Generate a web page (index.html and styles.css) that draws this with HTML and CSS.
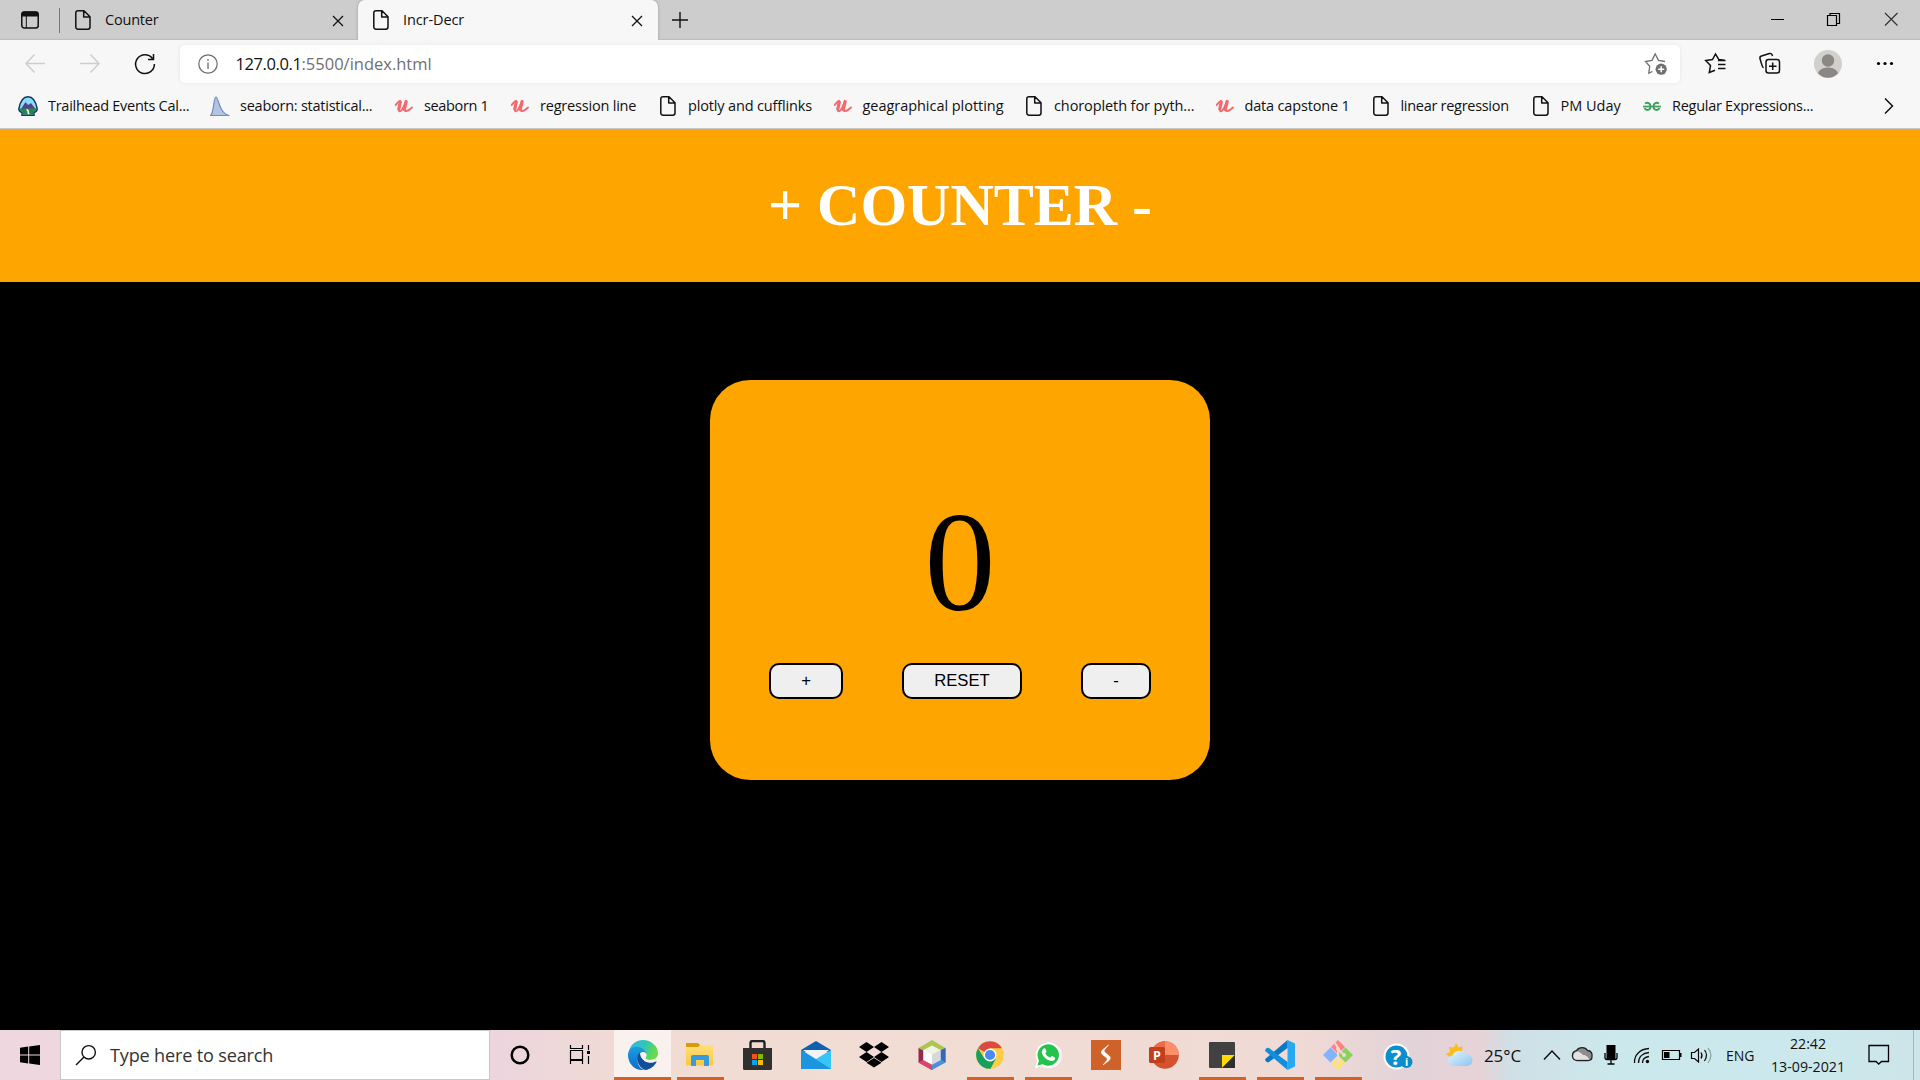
FILE: index.html
```html
<!DOCTYPE html>
<html lang="en">
<head>
<meta charset="utf-8">
<title>Incr-Decr</title>
<link rel="stylesheet" href="styles.css">
</head>
<body>
<svg class="defs" width="0" height="0">
  <defs>
    <symbol id="page" viewBox="0 0 20 20"><path d="M5 .8h6l6 6V17a2.200 2.200 0 0 1-2.200 2.200H5A2.200 2.200 0 0 1 2.800 17V3A2.200 2.200 0 0 1 5 .8zM10.700 1v6h6" fill="none" stroke="#111" stroke-width="1.500" stroke-linejoin="round"/></symbol>
    <symbol id="udemy" viewBox="0 0 20 20"><path d="M1.800 9C3.300 7 5 4.500 6.200 5 7.300 6 3 14.500 5.500 15.200 8 16 10.500 9 12 5.500 10.800 9.500 9.500 14.500 11.700 15 14 15.500 16 13 18 11.500" fill="none" stroke="#f26a6e" stroke-width="2" stroke-linecap="round"/><path d="M6.300 6L4.800 13M12.200 5.500l-2 8" stroke="#f26a6e" stroke-width="3.200" stroke-linecap="round"/></symbol>
    <symbol id="close" viewBox="0 0 12 12"><path d="M1 1l10 10M11 1L1 11" fill="none" stroke="#111" stroke-width="1.300"/></symbol>
    <linearGradient id="edgeTop" x1="0" x2="1" y1="0" y2=".4"><stop offset="0" stop-color="#35b4ec"/><stop offset=".55" stop-color="#30c6b8"/><stop offset="1" stop-color="#66dc48"/></linearGradient>
    <linearGradient id="edgeLow" x1="0" x2="0" y1="0" y2="1"><stop offset="0" stop-color="#1b9de2"/><stop offset="1" stop-color="#0f6cc8"/></linearGradient>
    <linearGradient id="folder" x1="0" x2="0" y1="0" y2="1"><stop offset="0" stop-color="#ffdf7a"/><stop offset="1" stop-color="#fbc83c"/></linearGradient>
    <linearGradient id="cloud" x1="0" x2="1" y1="0" y2="1"><stop offset="0" stop-color="#e6f5ff"/><stop offset="1" stop-color="#8dc4f2"/></linearGradient>
  </defs>
</svg>

<div class="tabs">
  <svg class="tab-menu" width="20" height="20" viewBox="0 0 20 20"><rect x="1.800" y="2" width="16.400" height="16" rx="2.500" fill="none" stroke="#111" stroke-width="1.500"/><path d="M1.500 6.500V4A2.500 2.500 0 0 1 4 1.500h12A2.500 2.500 0 0 1 18.500 4v2.500z" fill="#111"/><path d="M6.300 6v12" stroke="#111"/></svg>
  <div class="tab first"><svg class="i20"><use href="#page"/></svg><span class="tab-name">Counter</span><svg class="x"><use href="#close"/></svg></div>
  <div class="tab active"><svg class="i20"><use href="#page"/></svg><span class="tab-name">Incr-Decr</span><svg class="x"><use href="#close"/></svg></div>
  <svg class="plus" width="18" height="18" viewBox="0 0 18 18"><path d="M9 1v16M1 9h16" stroke="#111" stroke-width="1.400"/></svg>
  <svg class="winctl" width="128" height="20" viewBox="0 0 128 20"><path d="M1 9.500h13M57.500 5.500h9v10h-9zM60 5V3.500h9.500v10H67" fill="none" stroke="#000" stroke-width="1.200"/><path d="M115 3l12.500 12.500M127.500 3L115 15.500" stroke="#333" stroke-width="1.200"/></svg>
</div>

<div class="toolbar">
  <svg class="nav" width="140" height="24" viewBox="0 0 140 24"><path d="M20 11.500H1M9.500 2.500L1 11.500l8.500 9M55 11.500h19M65.500 2.500l8.500 9-8.500 9" fill="none" stroke="#cdcdcd" stroke-width="1.400"/><path d="M127.500 6.500A9.400 9.400 0 1 0 129.400 12M128.500 2v5.500h-5.500" fill="none" stroke="#111" stroke-width="1.500"/></svg>
  <div class="address">
    <svg width="20" height="20" viewBox="0 0 20 20"><circle cx="10" cy="10" r="9.200" fill="none" stroke="#6b6b6b" stroke-width="1.200"/><path d="M10 8.500V15M10 5v1.700" stroke="#6b6b6b" stroke-width="1.300"/></svg>
    <span class="url"><span class="host">127.0.0.1</span>:5500/index.html</span>
    <svg class="fav" width="24" height="24" viewBox="0 0 24 24"><path d="M8.500 19.500L4.800 21.200 5.700 14.300 1.500 9.500 8 8.300 11.200 2 14.500 8.300 21 9.500" fill="none" stroke="#707070" stroke-width="1.300"/><circle cx="17.200" cy="17.200" r="5.600" fill="#707070"/><path d="M17.200 14.200v6M14.200 17.200h6" stroke="#fff" stroke-width="1.500"/></svg>
  </div>
  <svg class="tools" width="204" height="30" viewBox="0 0 204 30">
    <path d="M20.500 11.200l-5.800-.8L11.500 5 8.500 10.500 1.700 11.500 6.500 16.500 5.300 23.500 11 21.200M14 15.500h7.500M14 11.500h7.500M14 19.500h7.500" fill="none" stroke="#111" stroke-width="1.500"/>
    <rect x="62" y="10.500" width="13.500" height="13.500" rx="2.500" fill="none" stroke="#111" stroke-width="1.500"/><path d="M68.700 13.500v7.500M65 17.200h7.500M59.500 18.800C58 18 58 16 57.300 14L56 9.700c-.4-1.400.3-2.300 1.500-2.700l8-2.500c1.300-.4 2.500.2 3 2.500" fill="none" stroke="#111" stroke-width="1.500"/>
    <circle cx="124" cy="15" r="14" fill="#d2d0cd"/><circle cx="124" cy="11.500" r="6.200" fill="#8b8784"/><path d="M114 24.500c2-8 18-8 20 0a14 14 0 0 1-20 0z" fill="#8b8784"/>
    <circle cx="174.500" cy="14.500" r="1.600"/><circle cx="181" cy="14.500" r="1.600"/><circle cx="187.500" cy="14.500" r="1.600"/>
  </svg>
</div>

<div class="bookmarks">
  <div class="bm b1"><svg class="i20" viewBox="0 0 20 20"><path d="M10 .8C15 .8 18 6 19.200 13c0 2-1.200 2.800-3.200 3.500v2.700H4v-2.700C2 15.800.8 15 .8 13 2 6 5 .8 10 .8z" fill="#8bdcfa" stroke="#173a63" stroke-width="1.500"/><path d="M3 13l4.500-7 2.700 3L13 7l4.500 6z" fill="#57408f"/><path d="M1.500 12.500h17c-.3 2-1.500 2.800-3.500 3.500v2.500H5V16c-2-.7-3.200-1.500-3.500-3.500z" fill="#238749"/><path d="M8.500 13.500c3 1 .5 2 2.500 4.500" stroke="#fff" stroke-width="1.700" fill="none"/></svg><span>Trailhead Events Cal...</span></div>
  <div class="bm b2"><svg class="i20" viewBox="0 0 20 20"><path d="M.5 19.500C4 17 3.500 1 6 1s3 17 13.500 18.500z" fill="#b4c4df" stroke="#6c8dc4" stroke-width="1.200"/></svg><span>seaborn: statistical...</span></div>
  <div class="bm b3"><svg class="i20"><use href="#udemy"/></svg><span>seaborn 1</span></div>
  <div class="bm b4"><svg class="i20"><use href="#udemy"/></svg><span>regression line</span></div>
  <div class="bm b5"><svg class="i20"><use href="#page"/></svg><span>plotly and cufflinks</span></div>
  <div class="bm b6"><svg class="i20"><use href="#udemy"/></svg><span>geagraphical plotting</span></div>
  <div class="bm b7"><svg class="i20"><use href="#page"/></svg><span>choropleth for pyth...</span></div>
  <div class="bm b8"><svg class="i20"><use href="#udemy"/></svg><span>data capstone 1</span></div>
  <div class="bm b9"><svg class="i20"><use href="#page"/></svg><span>linear regression</span></div>
  <div class="bm b10"><svg class="i20"><use href="#page"/></svg><span>PM Uday</span></div>
  <div class="bm b11"><svg class="i20" viewBox="0 0 20 20"><path d="M3 7.500C5.500 6 8.500 7 8.500 10.500c0 4-4.500 4.500-6 1.500M17 7.500c-2.500-1.500-5.500-.5-5.500 3 0 4 4.500 4.500 6 1.500" fill="none" stroke="#3f9f5c" stroke-width="1.900"/><path d="M1 10.500h18" stroke="#3f9f5c" stroke-width="1.700"/></svg><span>Regular Expressions...</span></div>
  <svg class="more" width="10" height="18" viewBox="0 0 10 18"><path d="M1 1.500L8.500 9 1 16.500" fill="none" stroke="#111" stroke-width="1.500"/></svg>
</div>

<header class="banner"><h1>+ COUNTER -</h1></header>
<main class="stage">
  <section class="card">
    <div class="count">0</div>
    <div class="actions"><button class="inc">+</button><button class="reset">RESET</button><button class="dec">-</button></div>
  </section>
</main>

<footer class="taskbar">
  <div class="start"><svg width="20" height="20" viewBox="0 0 20 20"><path d="M0 2.800L8.200 1.600V9.500H0zM9.200 1.500L20 0v9.500H9.200zM0 10.500h8.200v7.900L0 17.200zM9.200 10.500H20V20L9.200 18.500z"/></svg></div>
  <div class="search"><svg width="22" height="22" viewBox="0 0 22 22"><circle cx="13.700" cy="8.300" r="6.700" fill="none" stroke="#111" stroke-width="1.400"/><path d="M9 13L1 21" stroke="#111" stroke-width="1.400"/></svg><span>Type here to search</span></div>
  <div class="apps">
    <div class="app wide"><svg width="30" height="30" viewBox="0 0 30 30"><circle cx="15" cy="15" r="8.300" fill="none" stroke="#000" stroke-width="2.500"/></svg></div>
    <div class="app wide"><svg width="30" height="30" viewBox="0 0 30 30"><path d="M4.500 5v3.500h12V5M4.500 24v-3.500h12V24M4.500 10.500h12v9h-12zM22.500 5v5M22.500 16v8" fill="none" stroke="#000" stroke-width="1.200"/><path d="M21 11h3v3h-3z"/></svg></div>
    <div class="app open current"><svg width="30" height="30" viewBox="0 0 30 30"><path d="M1 11C3 4 8 0 15 0c8 0 15 6 15 13 0 5-4 7-8 7-3 0-5-1-4.500-2 .4-.8 1-1.500 1-3 0-5-6-8-11-7-4 .8-6 3-6.500 3z" fill="url(#edgeTop)"/><path d="M0 15C0 9 5 6 10 7c5 .5 8.500 4 8.500 8 0-2-2-3.500-4-3-4 1-5 5-5 8 0 5 3 9 7 10C7 31 0 24 0 15z" fill="url(#edgeLow)"/><path d="M12 12.500C9 15 9 18 9.500 21c1 4 4 8 8 9 5-.5 9-4 11-8 .3-.8-.4-1-1-.6-4 2-8 1.600-11-.4-3.500-2.500-4.500-5.500-4.500-8.500z" fill="#114f9c"/><path d="M14.500 12.300c2 0 4 1.200 4 3-.2 1.500-1.300 2-1 3.200.8 1.800 6 2 9.500.3.800.8 1 1.500 1 2.400-5 2.400-10 .8-12.500-2-2-2.500-2.500-5-1-6.900z" fill="#f9f1ee"/></svg></div>
    <div class="app open"><svg width="30" height="30" viewBox="0 0 30 30"><path d="M1 3h12l2 2v4H1z" fill="#dc9a07"/><path d="M1 7h12l2.500-2H27a1 1 0 0 1 1 1v18.500a1 1 0 0 1-1 1H2a1 1 0 0 1-1-1z" fill="url(#folder)"/><path d="M8 15h14a2 2 0 0 1 2 2v9h-5v-6h-8v6H6v-9a2 2 0 0 1 2-2z" fill="#3b99dd"/></svg></div>
    <div class="app"><svg width="30" height="30" viewBox="0 0 30 30"><path d="M7.500 9V3a2 2 0 0 1 2-2h10a2 2 0 0 1 2 2v6" fill="none" stroke="#222" stroke-width="2.400"/><path d="M0 8h29v20.500a1.500 1.500 0 0 1-1.500 1.500h-26A1.500 1.500 0 0 1 0 28.500z" fill="#303030"/><path d="M9 14h5v5H9z" fill="#f25022"/><path d="M15 14h5v5h-5z" fill="#7fba00"/><path d="M9 20h5v5H9z" fill="#00a4ef"/><path d="M15 20h5v5h-5z" fill="#ffb900"/></svg></div>
    <div class="app"><svg width="30" height="30" viewBox="0 0 30 30"><path d="M0 10L15 1l15 9v2H0z" fill="#1060b0"/><path d="M2 10h26L16 20z" fill="#f3f3f3"/><path d="M0 10l15 9 15-9v19H0z" fill="#37c5f5"/><path d="M0 10l30 19H0z" fill="#1b95e0"/></svg></div>
    <div class="app"><svg width="30" height="30" viewBox="0 0 30 30"><path d="M7.500 2L15 7 7.500 12 0 7zM22.500 2L30 7l-7.500 5L15 7zM7.500 12L15 17l-7.500 5L0 17zM22.500 12L30 17l-7.500 5L15 17zM15 18l7.500 4.700L15 27.500l-7.500-4.800z"/></svg></div>
    <div class="app"><svg width="30" height="30" viewBox="0 0 30 30"><path d="M1.500 8L15 0l13.500 8L15 15z" fill="#adc551"/><path d="M1.500 8L15 15v15L1.500 22.500z" fill="#98284b"/><path d="M1.500 22.500L9 18l6 4v8z" fill="#d9466a"/><path d="M28.500 8L15 15v15l13.500-7.500z" fill="#4b8fdd"/><path d="M28.500 8v14.500L22 18V11z" fill="#3568b4"/><path d="M6.500 10L15 5.500 23.500 10v10L15 24.500 6.500 20z" fill="#f1f4e2"/><path d="M15 14.500l8.500-4.500v10L15 24.500z" fill="#d6d8dc"/><path d="M6.500 10l8.500 4.500v10L6.500 20z" fill="#fff"/></svg></div>
    <div class="app open"><svg width="30" height="30" viewBox="0 0 30 30"><circle cx="15" cy="15" r="13.800" fill="#ffcd46"/><path d="M15 15L3 8.200A13.800 13.800 0 0 1 27 8.200H15z" fill="#db4a3d"/><path d="M3 8.200a13.800 13.800 0 0 0 12.500 20.600l5.400-10.400L15 21l-6-3z" fill="#199e5b"/><circle cx="15" cy="15" r="6.400" fill="#fff"/><circle cx="15" cy="15" r="5.100" fill="#4b8bf3"/></svg></div>
    <div class="app open"><svg width="30" height="30" viewBox="0 0 30 30"><path d="M2 28l2-7A13 13 0 1 1 9 26.500z" fill="#fff"/><path d="M4.500 25.500l1.500-5A10.700 10.700 0 1 1 9.800 24.300z" fill="#25c24d"/><path d="M10 9c1-1.200 2-1 2.400-.2l1 2.400c.3.700-1.100 1.700-1 2.100.8 2 2.800 3.600 4.600 4.200.7.200 1.500-1.700 2.200-1.400l2.600 1.300c.7.400.3 1.700-.3 2.400-1.200 1.400-3.200 1.400-5 .8C13 19.500 10.200 16.500 9 13.400c-.4-1.600 0-3.300 1-4.400z" fill="#fff"/></svg></div>
    <div class="app"><svg width="30" height="30" viewBox="0 0 30 30"><path d="M0 0h30v30H0z" fill="#ce6229"/><path d="M17.500 5l-5.500 4.500c-2 1.800-2.300 3.500-.5 5l4 3.200c1 1 1 1.600.3 2.800L12 25l6-4.500c1.800-1.700 1.700-3.300 0-4.800l-4-3.200c-1-1-1-1.700-.3-2.900z" fill="#fff" stroke="#fff" stroke-width=".6"/></svg></div>
    <div class="app"><svg width="30" height="30" viewBox="0 0 30 30"><circle cx="16" cy="15" r="13.800" fill="#d35230"/><path d="M16 15V1.200A13.800 13.800 0 0 1 29.800 15z" fill="#ff8f6b"/><path d="M16 15V1.200A13.800 13.800 0 0 0 2.200 15z" fill="#ed6c47"/><rect x="0" y="7" width="16" height="16" rx="1.500" fill="#c43e1c"/><text class="glyph" x="8" y="19.500" font-size="12.500">P</text></svg></div>
    <div class="app open"><svg width="30" height="30" viewBox="0 0 30 30"><path d="M2 3a1 1 0 0 1 1-1h24a1 1 0 0 1 1 1v24a1 1 0 0 1-1 1H3a1 1 0 0 1-1-1z" fill="#414141"/><path d="M15 15h13L15 28z" fill="#ffdb00"/><path d="M28 15v13H15z" fill="#2e2e2e"/></svg></div>
    <div class="app open"><svg width="30" height="30" viewBox="0 0 30 30"><path d="M22.500 0L30 3.500v23L22.500 30z" fill="#29a8f2"/><path d="M22.500 0v8L4 22c-1 .6-2 .3-2.600-.3L.4 20.500C0 20 0 19.300.5 18.800z" fill="#0b78c4"/><path d="M22.500 30v-8L4 8c-1-.6-2-.3-2.600.3L.4 9.500C0 10 0 10.700.5 11.200z" fill="#118fdc"/></svg></div>
    <div class="app open"><svg width="30" height="30" viewBox="0 0 30 30"><path d="M15 0l7 7-7 7-7-7z" fill="#fd8282"/><path d="M7.500 7.500L15 15l-7.500 7.500L0 15z" fill="#82b3fc"/><path d="M22.500 7.500L30 15l-7.500 7.500L15 15z" fill="#8bd15f"/><path d="M15 16l7 7-7 7-7-7z" fill="#fde27c"/><path d="M12 3l3 5v14M15 9l5 5" fill="none" stroke="#f0dad3" stroke-width="2"/><circle cx="15" cy="9" r="2" fill="#f0dad3"/><circle cx="15" cy="22" r="2" fill="#f0dad3"/><circle cx="21" cy="15" r="2" fill="#f0dad3"/></svg></div>
    <div class="app help"><svg width="30" height="30" viewBox="0 0 30 30"><circle cx="13.500" cy="16.500" r="13" fill="#fff"/><circle cx="13.500" cy="16.500" r="11" fill="#0d8fce"/><text class="glyph" x="13" y="24.500" font-size="22">?</text><circle cx="23.500" cy="22" r="6" fill="#0a8ccb"/><text class="glyph" x="23.500" y="26" font-size="10.500">i</text></svg></div>
  </div>
  <div class="tray">
    <svg class="weather" width="28" height="26" viewBox="0 0 28 26"><path d="M10 1l2.500 4.500 4-1-1 7L5 16 0 12l4-2-1-5 5 .5z" fill="#fbbd19"/><path d="M7 24a5.300 5.300 0 0 1-.5-10.500C8 8 16 7 18 12c4-1 8 2 8.500 6 0 4-3 6-6.500 6z" fill="url(#cloud)"/></svg>
    <span class="temp">25°C</span>
    <svg class="status" width="176" height="24" viewBox="0 0 176 24">
      <path d="M1 16.500L9 8l8 8.500" fill="none" stroke="#111" stroke-width="1.500"/>
      <path d="M34 17.500a5 5 0 0 1-.5-9.900C36 4 42 3.500 44.500 7.500c4 0 5 3.500 4.500 6 0 3-2 4-4 4z" fill="#8d8d8d" stroke="#222" stroke-width="1.300"/><path d="M33.500 16.800c-4.500-1-4-7 .5-8.300 3 0 4 2 6 3.500 3 0 5 1.500 6.500 4.800z" fill="#e2e2e2"/>
      <path d="M63.500 2h9v14h-9z"/><path d="M62 10v4.500a2 2 0 0 0 2 2h8a2 2 0 0 0 2-2V10M68 17v4M64.500 21h7" fill="none" stroke="#000" stroke-width="1.300"/>
      <path d="M91.500 20C91 12 97 6 106 5.500M95.500 20c0-6 4-10 10.500-10.500M99.500 20c0-4 2.500-6 6.500-6.500" fill="none" stroke="#111" stroke-width="1.300"/><circle cx="104.500" cy="18.500" r="1.700"/>
      <path d="M119.500 7.500h17v9h-17z" fill="none" stroke="#000" stroke-width="1.200"/><path d="M121 9h5.500v6H121zM137 10h1.500v4H137z"/>
      <path d="M148.500 9.500h3l4-3.500v13l-4-3.500h-3zM158 9.500q2 3 0 6M161.500 7q4 5 0 11" fill="none" stroke="#000" stroke-width="1.200"/><path d="M165 5q6 7 0 15" fill="none" stroke="#8ba3a5" stroke-width="1.200"/>
    </svg>
    <span class="lang">ENG</span>
    <div class="clock"><span>22:42</span><span>13-09-2021</span></div>
    <svg class="notice" width="22" height="22" viewBox="0 0 22 22"><path d="M1 1.500h19.500v16h-7L10.700 20 8 17.500H1z" fill="none" stroke="#000" stroke-width="1.300"/></svg>
  </div>
</footer>
</body>
</html>
```
FILE: styles.css
```css
* { box-sizing: border-box; }
body { margin: 0; width: 1920px; height: 1080px; overflow: hidden; display: flex; flex-direction: column; background: #000; color: #111; font-family: "Open Sans", "Noto Sans", sans-serif; font-size: 14.5px; white-space: nowrap; }
svg { display: block; flex: none; }
.defs { position: absolute; }
.i20 { width: 20px; height: 20px; }

.tabs { flex: none; height: 40px; background: #cdcdcd; display: flex; align-items: center; box-shadow: inset 0 -1px #bcbcbc; }
.tab-menu { margin-left: 20px; }
.tab { height: 40px; display: flex; align-items: center; }
.first { width: 299px; margin-left: 19px; padding-right: 14px; }
.first::before { content: ""; width: 1px; height: 25px; background: #777; }
.first .i20 { margin-left: 13px; }
.tab-name { flex: 1; margin-left: 12px; padding-bottom: 2px; letter-spacing: -.2px; }
.x { width: 12px; height: 12px; margin-top: 1px; }
.active { width: 300px; background: #f7f7f7; border-radius: 7px 7px 0 0; padding: 0 15px 0 13px; box-shadow: 0 0 3px #999; clip-path: inset(0 -3px 0 -3px); }
.active .tab-name { letter-spacing: -.1px; }
.plus { margin-left: 12.5px; }
.winctl { margin-left: auto; margin-right: 22px; }

.toolbar { flex: none; height: 48px; padding-bottom: 1px; background: #f7f7f7; display: flex; align-items: center; }
.nav { margin-left: 25px; }
.address { width: 1500px; height: 38px; margin-left: 15px; padding: 0 12px 0 17.5px; background: #fff; border-radius: 5px; box-shadow: 0 0 4px #e5e5e5; display: flex; align-items: center; }
.url { flex: 1; margin-left: 18px; padding-bottom: 1px; font-size: 16.5px; color: #707070; }
.host { color: #111; letter-spacing: -.4px; }
.tools { margin-left: 24px; }

.bookmarks { flex: none; height: 41px; padding: 0 26px 4px 18px; background: #f7f7f7; border-bottom: 1px solid #c5c8cf; display: flex; align-items: center; }
.bm { flex: none; display: flex; align-items: center; gap: 10px; }
.bm span { padding-bottom: 2px; }
.b1 { width: 192px; letter-spacing: -.27px; }
.b2 { width: 184px; letter-spacing: -.24px; }
.b3 { width: 116px; letter-spacing: -.35px; }
.b4 { width: 148px; letter-spacing: -.2px; }
.b5 { width: 174.5px; letter-spacing: -.15px; }
.b6 { width: 191.5px; letter-spacing: -.04px; }
.b7 { width: 190.5px; letter-spacing: -.1px; }
.b8 { width: 156px; letter-spacing: -.17px; }
.b9 { width: 160px; letter-spacing: -.29px; }
.b10 { width: 111.5px; }
.b11 { letter-spacing: -.27px; }
.more { margin-left: auto; }

.banner { flex: none; height: 153px; padding-top: 42px; background: orange; text-align: center; }
.banner h1 { margin: 0; color: #fff; font: bold 60px "Liberation Serif", serif; }
.stage { flex: 1; display: flex; justify-content: center; padding-top: 98px; }
.card { width: 500px; height: 400px; padding-top: 102px; border-radius: 40px; background: orange; color: #000; }
.count { height: 181px; text-align: center; font: 142px/160px "Liberation Serif", serif; }
.actions { display: flex; justify-content: center; gap: 59px; }
.actions button { height: 36px; padding: 0; border: 2px solid #000; border-radius: 10px; background: #efefef; color: #000; font: 16.67px "Liberation Sans", sans-serif; }
.inc { width: 74px; }
.reset { width: 120px; }
.dec { width: 70px; }

.taskbar { flex: none; height: 50px; display: flex; background: linear-gradient(90deg, #efd7df 0, #ecd5dd 500px, #f0dcd3 640px, #f1ddd4 960px, #f0dad5 1300px, #e2d3d9 1410px, #e7d3d7 1480px, #cfdfe6 1510px, #cbe9ec 1620px, #cbe9ec 1810px, #cde4e9 1920px); }
.start { width: 60px; display: flex; align-items: center; justify-content: center; }
.search { width: 430px; margin-right: -1px; border: 1px solid #c8c8c8; background: #fff; display: flex; align-items: center; padding-left: 14px; gap: 13px; font-size: 18.1px; letter-spacing: -.17px; color: #333; }
.apps { display: flex; margin-left: 2px; }
.app { width: 58px; display: flex; align-items: center; justify-content: center; position: relative; }
.wide { width: 61px; padding-right: 3px; }
.open::after { content: ""; position: absolute; left: 5.5px; right: 5.5px; bottom: 0; height: 3px; background: #ce6229; }
.current { width: 57px; margin-left: 1px; background: #f9f1ee; }
.current::after { left: 0; right: 0; }
.help { padding-left: 4px; }
.glyph { fill: #fff; font-family: "Open Sans", sans-serif; font-weight: 700; text-anchor: middle; }
.tray { flex: 1; display: flex; align-items: center; padding-right: 30px; box-shadow: inset -6px 0 #cde4e9, inset -7px 0 #a3b8bd; }
.weather { margin-left: 21px; }
.temp { width: 59px; margin-left: 10px; font-size: 17px; letter-spacing: -.1px; }
.lang { width: 44px; margin-left: 7px; font-size: 14px; }
.clock { width: 76px; display: flex; flex-direction: column; align-items: center; font-size: 14.2px; line-height: 23px; }
.notice { margin-left: auto; }
```
